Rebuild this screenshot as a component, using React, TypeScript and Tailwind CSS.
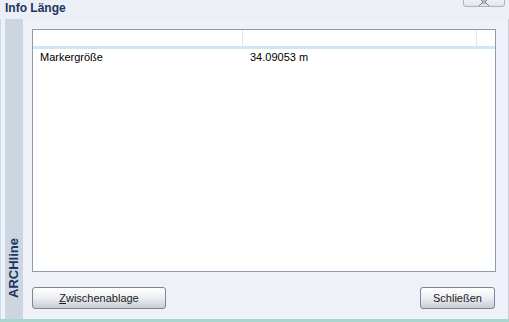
import React from "react";

const rows = [{ name: "Markergröße", value: "34.09053 m" }];

export default function App() {
    return (
        <div
            className="w-[509px] h-[322px] bg-[#eef1f7] flex flex-col overflow-hidden"
            style={{ fontFamily: '"Liberation Sans", Arial, sans-serif' }}
        >
            {/* Title bar */}
            <div className="h-[19px] flex items-start justify-between bg-[#eceff5] pl-[5px] pr-[4px]">
                <div className="text-[12px] font-bold text-[#1c3560] leading-[14px] mt-[1px]">Info Länge</div>
                <div className="w-[42px] h-[10px] -mt-[3px] rounded-b-[3px] border border-[#a9b4c4] bg-gradient-to-b from-[#f6f7fa] to-[#dfe3ea] flex items-end justify-center overflow-hidden">
                    <svg width="12" height="8" viewBox="0 0 12 8" className="mb-[0px]">
                        <path d="M1 0 L5 4 L1 8 M11 0 L7 4 L11 8 M4 3 L8 3 M4 5 L8 5" stroke="#7d8798" strokeWidth="1" fill="none" />
                    </svg>
                </div>
            </div>

            {/* Body */}
            <div className="flex-1 flex border-b-[3px] border-[#a9d6cc]">
                <div className="w-[5px] border-l border-[#bfe0ea]" />
                <div className="w-[18px] bg-[#cdd5e1] flex items-end justify-center pb-[21px]">
                    <span className="[writing-mode:vertical-rl] rotate-180 text-[13px] font-bold text-[#1c3560] leading-[18px]">
                        ARCHline
                    </span>
                </div>
                <div className="flex-1 flex flex-col pl-[9px] pr-[12px] pt-[10px] pb-[10px] border-r border-[#c9cfda]">
                    {/* List */}
                    <div className="h-[243px] bg-white border border-[#8e9aae]">
                        <div className="flex h-[19px] border-b-[3px] border-[#cfe6f3]">
                            <div className="w-[210px] border-r border-[#e3e7ec]" />
                            <div className="w-[234px] border-r border-[#e3e7ec]" />
                            <div className="flex-1" />
                        </div>
                        {rows.map((r) => (
                            <div key={r.name} className="flex h-[16px] items-center text-[11px] text-black">
                                <div className="w-[217px] pl-[7px]">{r.name}</div>
                                <div>{r.value}</div>
                            </div>
                        ))}
                    </div>
                    <div className="flex-1" />
                    {/* Buttons */}
                    <div className="flex justify-between pr-[1px]">
                        <button className="w-[134px] h-[22px] rounded-[3px] border border-[#7a8598] bg-gradient-to-b from-white via-[#eceef2] to-[#c7ccd5] text-[11px] text-[#1a1a1a]">
                            <span className="underline">Z</span>wischenablage
                        </button>
                        <button className="w-[75px] h-[22px] rounded-[3px] border border-[#7a8598] bg-gradient-to-b from-white via-[#eceef2] to-[#c7ccd5] text-[11px] text-[#1a1a1a]">
                            Schließen
                        </button>
                    </div>
                </div>
            </div>
        </div>
    );
}
